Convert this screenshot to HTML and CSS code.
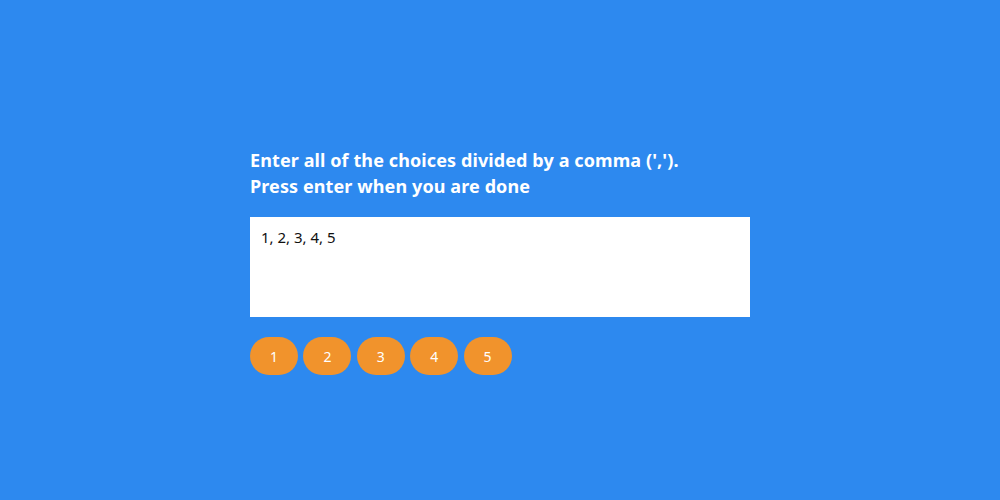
FILE: index.html
```html
<!DOCTYPE html>
<html>
<head>
<meta charset="utf-8">
<link rel="stylesheet" href="styles.css">
</head>
<body>
<main class="wrap">
  <h1 class="title">Enter all of the choices divided by a comma (',').<br>Press enter when you are done</h1>
  <textarea class="input">1, 2, 3, 4, 5</textarea>
  <div class="choices">
    <span class="choice">1</span>
    <span class="choice">2</span>
    <span class="choice">3</span>
    <span class="choice">4</span>
    <span class="choice">5</span>
  </div>
</main>
</body>
</html>
```
FILE: styles.css
```css
html, body {
  margin: 0;
  height: 100%;
}
body {
  background: #2d89ef;
  font-family: "Noto Sans", sans-serif;
}
.wrap {
  width: 500px;
  margin: 0 auto;
  padding-top: 147px;
}
.title {
  margin: 0 0 18px;
  font-size: 18px;
  line-height: 26px;
  font-weight: 700;
  color: #fff;
  letter-spacing: 0.1px;
}
.input {
  display: block;
  box-sizing: border-box;
  width: 500px;
  height: 100px;
  margin: 0;
  border: none;
  outline: none;
  resize: none;
  padding: 10px 11px;
  font-family: "Noto Sans", sans-serif;
  font-size: 15px;
  color: #111;
  background: #fff;
}
.choices {
  display: flex;
  gap: 5.4px;
  margin-top: 20px;
}
.choice {
  width: 48px;
  height: 38px;
  border-radius: 19px;
  background: #f1932c;
  color: #fff;
  font-size: 14px;
  display: flex;
  align-items: center;
  justify-content: center;
}
```
